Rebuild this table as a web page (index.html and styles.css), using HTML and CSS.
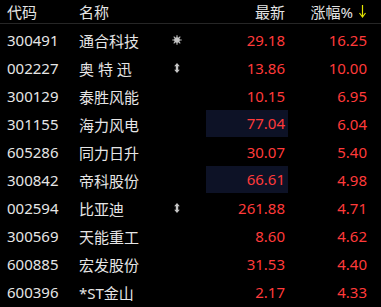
FILE: index.html
```html
<!DOCTYPE html>
<html lang="zh">
<head>
<meta charset="utf-8">
<link rel="stylesheet" href="styles.css">
</head>
<body>
<div class="table">
  <div class="head">
    <span class="c-code">代码</span>
    <span class="c-name">名称</span>
    <span class="c-icon"><span class="dot"></span></span>
    <span class="c-price">最新</span>
    <span class="c-pct">涨幅%<svg class="sort" width="7" height="13" viewBox="0 0 7 13"><path d="M3.5 0 V11" stroke="#e4e400" stroke-width="1.2"/><path d="M0.5 8 L3.5 12 L6.5 8" fill="none" stroke="#e4e400" stroke-width="1.2"/></svg></span>
  </div>
  <div class="row">
    <span class="c-code">300491</span><span class="c-name">通合科技</span>
    <span class="c-icon"><svg width="10" height="10" viewBox="0 0 10 10"><g stroke="#c4c4c4" stroke-width="1.1"><path d="M5 0.3V9.7M0.3 5H9.7M1.7 1.7L8.3 8.3M8.3 1.7L1.7 8.3"/></g><circle cx="5" cy="5" r="2.8" fill="#c4c4c4"/></svg></span>
    <span class="c-price">29.18</span><span class="c-pct">16.25</span>
  </div>
  <div class="row">
    <span class="c-code">002227</span><span class="c-name">奥 特 迅</span>
    <span class="c-icon"><svg class="ud" width="6" height="10" viewBox="0 0 6 10"><path d="M3 0L5.8 3.2H4.2V6.8H5.8L3 10L0.2 6.8H1.8V3.2H0.2Z" fill="#c4c4c4"/></svg></span>
    <span class="c-price">13.86</span><span class="c-pct">10.00</span>
  </div>
  <div class="row">
    <span class="c-code">300129</span><span class="c-name">泰胜风能</span><span class="c-icon"></span>
    <span class="c-price">10.15</span><span class="c-pct">6.95</span>
  </div>
  <div class="row">
    <span class="c-code">301155</span><span class="c-name">海力风电</span><span class="c-icon"></span>
    <span class="c-price hl">77.04</span><span class="c-pct">6.04</span>
  </div>
  <div class="row">
    <span class="c-code">605286</span><span class="c-name">同力日升</span><span class="c-icon"></span>
    <span class="c-price">30.07</span><span class="c-pct">5.40</span>
  </div>
  <div class="row">
    <span class="c-code">300842</span><span class="c-name">帝科股份</span><span class="c-icon"></span>
    <span class="c-price hl">66.61</span><span class="c-pct">4.98</span>
  </div>
  <div class="row">
    <span class="c-code">002594</span><span class="c-name">比亚迪</span>
    <span class="c-icon"><svg class="ud" width="6" height="10" viewBox="0 0 6 10"><path d="M3 0L5.8 3.2H4.2V6.8H5.8L3 10L0.2 6.8H1.8V3.2H0.2Z" fill="#c4c4c4"/></svg></span>
    <span class="c-price">261.88</span><span class="c-pct">4.71</span>
  </div>
  <div class="row">
    <span class="c-code">300569</span><span class="c-name">天能重工</span><span class="c-icon"></span>
    <span class="c-price">8.60</span><span class="c-pct">4.62</span>
  </div>
  <div class="row">
    <span class="c-code">600885</span><span class="c-name">宏发股份</span><span class="c-icon"></span>
    <span class="c-price">31.53</span><span class="c-pct">4.40</span>
  </div>
  <div class="row">
    <span class="c-code">600396</span><span class="c-name">*ST金山</span><span class="c-icon"></span>
    <span class="c-price">2.17</span><span class="c-pct">4.33</span>
  </div>
</div>
</body>
</html>
```
FILE: styles.css
```css
html, body {
  margin: 0;
  padding: 0;
  background: #000;
}
body {
  width: 381px;
  height: 307px;
  overflow: hidden;
  font-family: "Noto Sans", "Noto Sans CJK SC", sans-serif;
  font-size: 15px;
  color: #e6e6e6;
}
.table {
  display: flex;
  flex-direction: column;
}
.head, .row {
  display: grid;
  grid-template-columns: 72px 90px 16px 21px 82px 79px;
  padding-left: 7px;
  align-items: center;
}
.head {
  height: 23px;
  border-bottom: 1px solid #262626;
  margin-bottom: 2px;
  color: #e4e4e4;
}
.row {
  height: 28px;
}
.c-code { grid-column: 1; }
.c-name { grid-column: 2; white-space: pre; }
.c-icon {
  grid-column: 3;
  display: flex;
  justify-content: center;
  align-items: center;
}
.c-price {
  grid-column: 5;
  text-align: right;
  padding-right: 3px;
  color: #ff3a3a;
}
.head .c-price { color: #e4e4e4; }
.c-pct {
  grid-column: 6;
  text-align: right;
  color: #ff3a3a;
}
.head .c-pct {
  color: #e4e4e4;
  display: flex;
  justify-content: flex-end;
  align-items: center;
  gap: 6px;
  padding-right: 1px;
}
.row .c-price.hl {
  background: #0d1226;
  align-self: start;
  height: 27px;
  line-height: 27px;
}
.dot {
  display: block;
  width: 8px;
  height: 8px;
  border-radius: 50%;
  background: #c8c8c8;
  margin-left: 38px;
}
.sort { display: block; }
```
